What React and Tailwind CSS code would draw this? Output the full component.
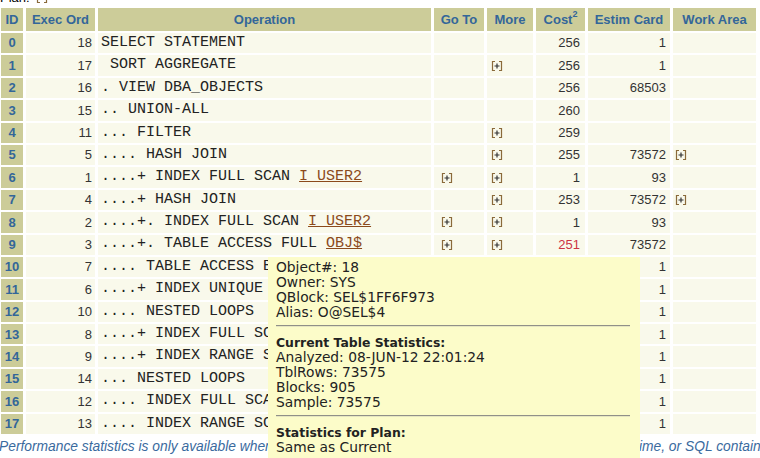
import React from 'react';

const rows = [
  { id: 0, ord: 18, op: 'SELECT STATEMENT', cost: '256', card: '1' },
  { id: 1, ord: 17, op: ' SORT AGGREGATE', more: true, cost: '256', card: '1' },
  { id: 2, ord: 16, op: '. VIEW DBA_OBJECTS', cost: '256', card: '68503' },
  { id: 3, ord: 15, op: '.. UNION-ALL', cost: '260' },
  { id: 4, ord: 11, op: '... FILTER', more: true, cost: '259' },
  { id: 5, ord: 5, op: '.... HASH JOIN', more: true, cost: '255', card: '73572', work: true },
  { id: 6, ord: 1, op: '....+ INDEX FULL SCAN ', link: 'I_USER2', go: true, more: true, cost: '1', card: '93' },
  { id: 7, ord: 4, op: '....+ HASH JOIN', more: true, cost: '253', card: '73572', work: true },
  { id: 8, ord: 2, op: '....+. INDEX FULL SCAN ', link: 'I_USER2', go: true, more: true, cost: '1', card: '93' },
  { id: 9, ord: 3, op: '....+. TABLE ACCESS FULL ', link: 'OBJ$', go: true, more: true, cost: '251', red: true, card: '73572' },
  { id: 10, ord: 7, op: '.... TABLE ACCESS BY INDEX ROWID ', link: 'USER$', go: true, more: true, cost: '1', card: '1' },
  { id: 11, ord: 6, op: '....+ INDEX UNIQUE SCAN ', link: 'I_USER2', go: true, more: true, cost: '0', card: '1' },
  { id: 12, ord: 10, op: '.... NESTED LOOPS', more: true, cost: '2', card: '1' },
  { id: 13, ord: 8, op: '....+ INDEX FULL SCAN ', link: 'I_USER2', go: true, more: true, cost: '1', card: '1' },
  { id: 14, ord: 9, op: '....+ INDEX RANGE SCAN ', link: 'I_OBJ4', go: true, more: true, cost: '1', card: '1' },
  { id: 15, ord: 14, op: '... NESTED LOOPS', more: true, cost: '1', card: '1' },
  { id: 16, ord: 12, op: '.... INDEX FULL SCAN ', link: 'I_LINK1', go: true, more: true, cost: '0', card: '1' },
  { id: 17, ord: 13, op: '.... INDEX RANGE SCAN ', link: 'I_USER2', go: true, more: true, cost: '1', card: '1' },
];

function PlusBox({ minus }) {
  return (
    <svg width="12" height="12" viewBox="0 0 12 12" className="block">
      <path d="M4 1.5H1.5v9H4M8 1.5h2.5v9H8" stroke="#8a6a3a" strokeWidth="1.2" fill="none" />
      {minus ? (
        <path d="M3.5 6h5" stroke="#333" strokeWidth="1.2" />
      ) : (
        <path d="M6 3.5v5M3.5 6h5" stroke="#333" strokeWidth="1.2" />
      )}
    </svg>
  );
}

const head = 'flex items-center justify-center bg-[#cccc99] text-[#336699] font-bold text-[13px] h-[23px]';
const cell = 'flex items-center bg-[#f9f9eb] h-[20.4px]';

export default function App() {
  return (
    <div className="relative w-[760px] h-[458px] overflow-hidden bg-white font-['Liberation_Sans',Arial,sans-serif]">
      <div className="h-[8px] overflow-hidden">
        <div className="flex items-center gap-[6px] -mt-[12px] text-[13px] text-black">
          <span>Plan:</span>
          <PlusBox minus />
        </div>
      </div>

      <div className="grid grid-cols-[22px_69px_333px_50px_46px_49px_82px_83px] gap-x-[3px] gap-y-[2px] pl-[1px]">
        <div className={head}>ID</div>
        <div className={head}>Exec Ord</div>
        <div className={head}>Operation</div>
        <div className={head}>Go To</div>
        <div className={head}>More</div>
        <div className={head}>
          Cost<sup className="text-[9px] -mt-[2px]">2</sup>
        </div>
        <div className={head}>Estim Card</div>
        <div className={head}>Work Area</div>

        {rows.map((r) => (
          <React.Fragment key={r.id}>
            <div className="flex items-center justify-center bg-[#cccc99] text-[#336699] font-bold text-[13px] h-[20.4px]">
              {r.id}
            </div>
            <div className={cell + ' justify-end pr-[3px] text-[13px] text-[#333]'}>{r.ord}</div>
            <div className={cell + " pl-[3px] whitespace-pre font-['Liberation_Mono','Courier_New',monospace] text-[15px] text-[#222] overflow-hidden"}>
              {r.op}
              {r.link && <span className="text-[#8b4a1c] underline">{r.link}</span>}
            </div>
            <div className={cell + ' pl-[7px]'}>{r.go && <PlusBox />}</div>
            <div className={cell + ' pl-[4px]'}>{r.more && <PlusBox />}</div>
            <div className={cell + ' justify-end pr-[5px] text-[13px] ' + (r.red ? 'text-[#cc3344]' : 'text-[#333]')}>
              {r.cost}
            </div>
            <div className={cell + ' justify-end pr-[4px] text-[13px] text-[#333]'}>{r.card}</div>
            <div className={cell + ' pl-[2px]'}>{r.work && <PlusBox />}</div>
          </React.Fragment>
        ))}
      </div>

      <div className="mt-[5px] -ml-[1px] whitespace-nowrap italic text-[13.8px] leading-[16px] text-[#3a6a9e]">
        Performance statistics is only available when parameter "statistics_level" was set to "ALL" at hard parse time, or SQL contains the gather_plan_statistics hint.
      </div>

      <div className="absolute left-[268px] top-[257px] w-[372px] h-[210px] bg-[#fcfcc9] pt-[3px] pl-[8px] pr-[10px] font-['DejaVu_Sans',Verdana,sans-serif] text-[13.8px] leading-[15px] text-[#222]">
        <div>Object#: 18</div>
        <div>Owner: SYS</div>
        <div>QBlock: SEL$1FF6F973</div>
        <div>Alias: O@SEL$4</div>
        <div className="mt-[5px] mb-[8px] h-[2px] border-t border-[#909088] border-b border-b-[#e6e6c0]" />
        <div className="font-bold text-[12.4px]">Current Table Statistics:</div>
        <div>Analyzed: 08-JUN-12 22:01:24</div>
        <div>TblRows: 73575</div>
        <div>Blocks: 905</div>
        <div>Sample: 73575</div>
        <div className="mt-[5px] mb-[8px] h-[2px] border-t border-[#909088] border-b border-b-[#e6e6c0]" />
        <div className="font-bold text-[12.4px]">Statistics for Plan:</div>
        <div>Same as Current</div>
      </div>
    </div>
  );
}
